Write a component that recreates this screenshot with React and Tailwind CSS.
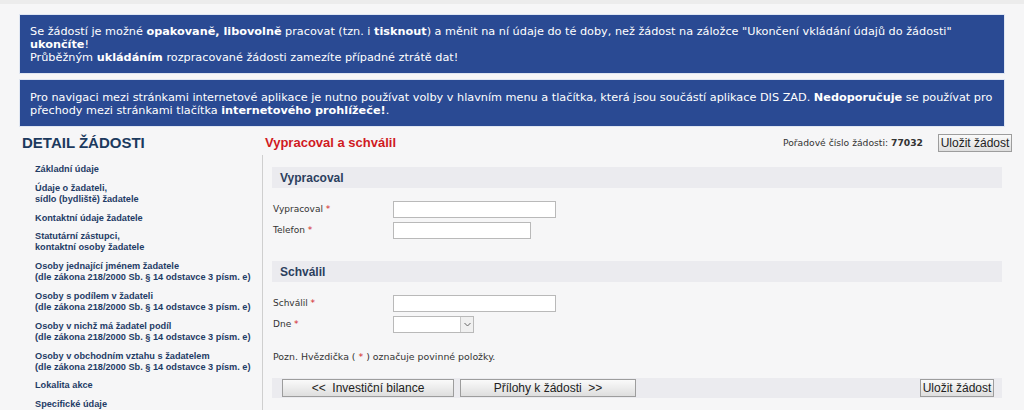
const menu = [
  ["Základní údaje"],
  ["Údaje o žadateli,", "sídlo (bydliště) žadatele"],
  ["Kontaktní údaje žadatele"],
  ["Statutární zástupci,", "kontaktní osoby žadatele"],
  ["Osoby jednající jménem žadatele", "(dle zákona 218/2000 Sb. § 14 odstavce 3 písm. e)"],
  ["Osoby s podílem v žadateli", "(dle zákona 218/2000 Sb. § 14 odstavce 3 písm. e)"],
  ["Osoby v nichž má žadatel podíl", "(dle zákona 218/2000 Sb. § 14 odstavce 3 písm. e)"],
  ["Osoby v obchodním vztahu s žadatelem", "(dle zákona 218/2000 Sb. § 14 odstavce 3 písm. e)"],
  ["Lokalita akce"],
  ["Specifické údaje"],
];

const verdana = "font-['DejaVu_Sans',sans-serif]";
const arial = "font-['Liberation_Sans',Arial,sans-serif]";

function Star() {
  return <span className="text-[#d2262b]">*</span>;
}

function Field({ label, width = "w-[163px]" }) {
  return (
    <div className="flex items-center h-[21px]">
      <div className={`w-[120px] text-[9px] text-[#333] ${verdana}`}>
        {label} <Star />
      </div>
      <input className={`${width} h-[17px] bg-white border border-[#b9b9b9]`} />
    </div>
  );
}

function GrayButton({ children, className = "" }) {
  return (
    <button
      className={`h-[18px] bg-gradient-to-b from-[#fafafa] to-[#dedede] border border-[#9d9d9d] text-[12px] text-[#222] leading-none ${arial} ${className}`}
    >
      {children}
    </button>
  );
}

function SectionHeader({ children }) {
  return (
    <div className={`h-[21px] bg-[#ebebef] pl-[8px] flex items-center text-[12px] font-bold text-[#2b3f5e] ${arial}`}>
      {children}
    </div>
  );
}

export default function App() {
  return (
    <div className="w-[1024px] h-[410px] overflow-hidden bg-[#f6f6f7] border-t-[4px] border-[#ececec]">
      <div className="mx-[20px] mt-[11px] w-[984px] bg-[#2a4a93] text-white px-[10px] pt-[10px] pb-[9px] text-[11.25px] leading-[13px] font-['DejaVu_Sans',sans-serif] outline outline-1 outline-[#dfe6f2]">
        Se žádostí je možné <b>opakovaně, libovolně</b> pracovat (tzn. i <b>tisknout</b>) a měnit na ní údaje do té doby, než žádost na záložce "Ukončení vkládání údajů do žádosti"
        <br />
        <b>ukončíte</b>!
        <br />
        Průběžným <b>ukládáním</b> rozpracované žádosti zamezíte případné ztrátě dat!
      </div>
      <div className="mx-[20px] mt-[7px] w-[984px] bg-[#2a4a93] text-white px-[10px] pt-[11px] pb-[9px] text-[11.25px] leading-[13px] font-['DejaVu_Sans',sans-serif] outline outline-1 outline-[#dfe6f2]">
        Pro navigaci mezi stránkami internetové aplikace je nutno používat volby v hlavním menu a tlačítka, která jsou součástí aplikace DIS ZAD. <b>Nedoporučuje</b> se používat pro
        <br />
        přechody mezi stránkami tlačítka <b>internetového prohlížeče!</b>.
      </div>

      <div className="flex mt-[8px]">
        <div className="w-[262px] shrink-0 pl-[22px]">
          <div className={`text-[15px] font-bold text-[#1c3a5e] leading-[18px] ${arial}`}>DETAIL ŽÁDOSTI</div>
          <div className="pl-[13px] pt-[12px] flex flex-col gap-[7.8px]">
            {menu.map((m, i) => (
              <div key={i} className={`text-[9.2px] font-bold text-[#1f3c66] leading-[11px] ${arial}`}>
                {m.map((l, j) => (
                  <div key={j}>{l}</div>
                ))}
              </div>
            ))}
          </div>
        </div>

        <div className="flex-1 pr-[12px]">
          <div className="flex items-center h-[18px] pl-[3px]">
            <div className={`text-[13px] font-bold text-[#d01a1f] ${arial}`}>Vypracoval a schválil</div>
            <div className={`ml-auto text-[9.2px] text-[#333] ${verdana}`}>
              Pořadové číslo žádosti: <b>77032</b>
            </div>
            <GrayButton className="ml-[15px] w-[74px]">Uložit žádost</GrayButton>
          </div>

          <div className="border-l border-[#cfcfcf] mt-[3px] pl-[9px] pr-[10px] pt-[12px] h-[260px]">
            <SectionHeader>Vypracoval</SectionHeader>
            <div className="pt-[11px] pl-[1px]">
              <Field label="Vypracoval" />
              <Field label="Telefon" width="w-[138px]" />
            </div>

            <div className="mt-[20px]">
              <SectionHeader>Schválil</SectionHeader>
            </div>
            <div className="pt-[11px] pl-[1px]">
              <Field label="Schválil" />
              <div className="flex items-center h-[21px]">
                <div className={`w-[120px] text-[9px] text-[#333] ${verdana}`}>
                  Dne <Star />
                </div>
                <div className="w-[81px] h-[17px] bg-white border border-[#b9b9b9] flex justify-end">
                  <div className="w-[13px] h-full border-l border-[#c8c8c8] bg-[#f0f0f0] flex items-center justify-center">
                    <svg width="7" height="5" viewBox="0 0 7 5">
                      <path d="M0.5 1 L3.5 4 L6.5 1" fill="none" stroke="#666" strokeWidth="1" />
                    </svg>
                  </div>
                </div>
              </div>
            </div>

            <div className={`mt-[15px] pl-[1px] text-[9.4px] text-[#333] ${verdana}`}>
              Pozn. Hvězdička ( <Star /> ) označuje povinné položky.
            </div>

            <div className="mt-[14px] h-[20px] bg-[#ebebef] flex items-center pl-[10px] pr-[8px]">
              <GrayButton className="w-[172px]">&lt;&lt;&nbsp; Investiční bilance</GrayButton>
              <GrayButton className="ml-[6px] w-[176px]">Přílohy k žádosti &nbsp;&gt;&gt;</GrayButton>
              <GrayButton className="ml-auto w-[74px]">Uložit žádost</GrayButton>
            </div>
          </div>
        </div>
      </div>
    </div>
  );
}
